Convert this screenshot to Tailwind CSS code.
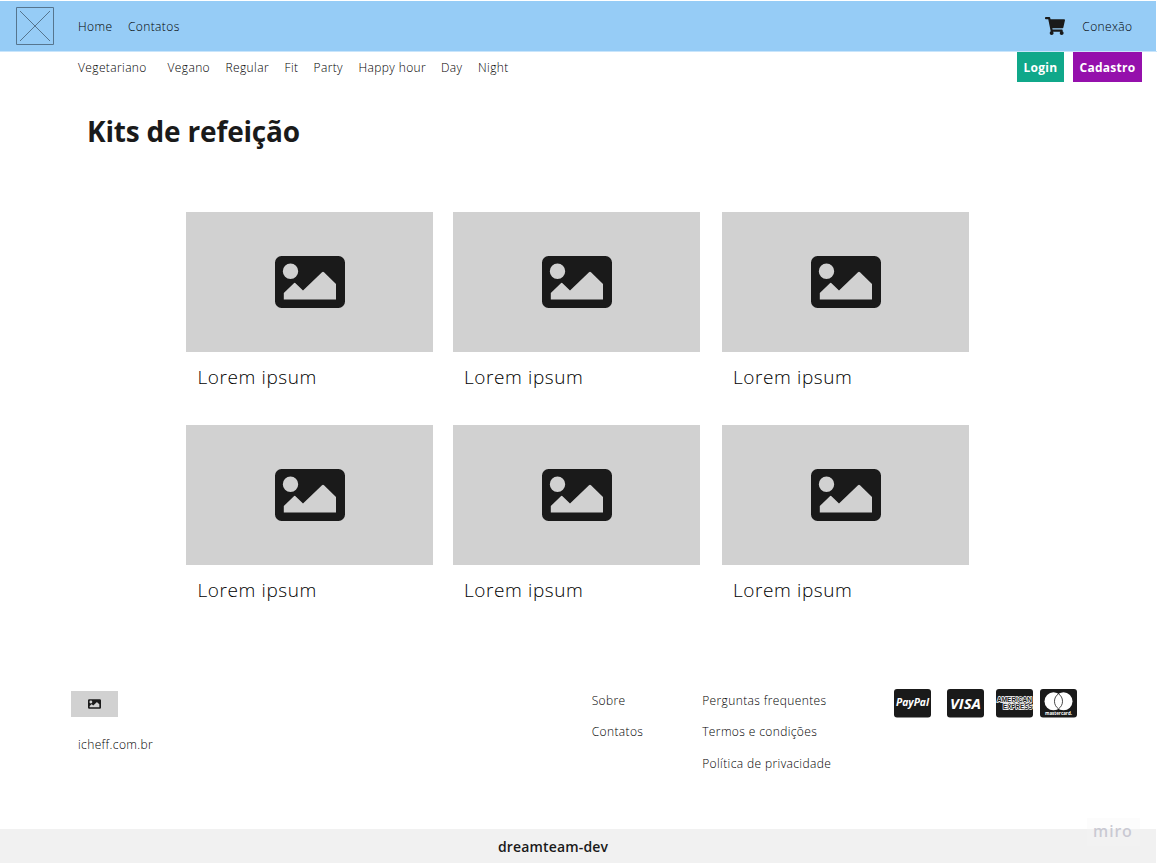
<!DOCTYPE html>
<html lang="pt-BR">
<head>
<meta charset="utf-8">
<title>Kits de refeição</title>
<script src="https://cdn.jsdelivr.net/npm/@tailwindcss/browser@4"></script>
</head>
<body class="relative flex h-[863px] w-[1157px] flex-col overflow-hidden bg-white font-['Open_Sans',sans-serif] text-[12px] leading-5 font-light tracking-[0.38px] whitespace-nowrap text-black">
<svg class="hidden">
  <symbol id="picture" viewBox="0 0 70 52"><path fill="#1a1a1a" fill-rule="evenodd" d="M6.500 0H63.500A6.500 6.500 0 0 1 70 6.500V45.500A6.500 6.500 0 0 1 63.500 52H6.500A6.500 6.500 0 0 1 0 45.500V6.500A6.500 6.500 0 0 1 6.500 0ZM15.500 7.500A7.700 7.700 0 1 0 15.500 22.900A7.700 7.700 0 1 0 15.500 7.500ZM8.800 43.600H61V28L49 16.200Q48 15.400 47 16.200L28 34.500L20.500 27.200Q19.700 26.500 18.900 27.200L8.800 37Z"/></symbol>
</svg>
<header class="mt-px flex h-[50px] w-[1156px] shrink-0 items-start bg-[#96ccf6] pt-[6px] pr-[23.500px] pl-4">
  <svg class="h-[38px] w-[38px]" viewBox="0 0 38 38" fill="none" stroke="#56758e" stroke-width="1"><path d="M.5.5h37v37H.5zM4 4l30 30M34 4L4 34"/></svg>
  <nav class="mt-[10px] ml-6 flex"><a class="w-[50px]">Home</a><a>Contatos</a></nav>
  <svg class="mt-[10px] ml-auto h-[18px] w-5" viewBox="0 0 576 512" preserveAspectRatio="none" fill="#1a1a1a"><path d="M528.120 301.319l47.273-208C578.806 78.301 567.391 64 551.990 64H159.208l-9.166-44.810C147.758 8.021 137.930 0 126.529 0H24C10.745 0 0 10.745 0 24v16c0 13.255 10.745 24 24 24h69.883l70.248 343.435C147.325 417.100 136 435.222 136 456c0 30.928 25.072 56 56 56s56-25.072 56-56c0-15.674-6.447-29.835-16.824-40h209.647C430.447 426.165 424 440.326 424 456c0 30.928 25.072 56 56 56s56-25.072 56-56c0-22.172-12.888-41.332-31.579-50.405l5.517-24.276c3.413-15.018-8.002-29.319-23.403-29.319H218.117l-6.545-32h293.145c11.206 0 20.920-7.754 23.403-18.681z"/></svg>
  <a class="mt-[10px] ml-[17px]">Conexão</a>
</header>
<div class="flex h-[31px] w-[1157px] shrink-0 border-t border-[#c9e5fb] pl-[78px]">
  <nav class="flex pt-[6px]"><a class="w-[89.500px]">Vegetariano</a><a class="w-[58px]">Vegano</a><a class="w-[59px]">Regular</a><a class="w-[29px]">Fit</a><a class="w-[45px]">Party</a><a class="w-[82.500px]">Happy hour</a><a class="w-[37px]">Day</a><a>Night</a></nav>
  <div class="mr-[15px] ml-auto flex gap-[9px] font-bold tracking-[0.250px] text-white">
    <a class="flex h-[30px] w-[47px] items-center justify-center bg-[#10a88a] pt-[2px]">Login</a>
    <a class="flex h-[30px] w-[69px] items-center justify-center bg-[#9510ac] pt-[2px]">Cadastro</a>
  </div>
</div>
<main class="h-[572px] shrink-0">
  <h1 class="mt-[29px] ml-[87px] text-[28px] leading-10 font-bold tracking-[-0.180px] text-[#1a1a1a]">Kits de refeição</h1>
  <div class="mt-[61px] ml-[186px] grid grid-cols-[266.500px_269px_247.500px] gap-y-[34px] text-[19px] tracking-[0.600px]">
    <article class="h-[179.300px] w-[247.400px]"><div class="flex h-[139.500px] items-center justify-center bg-[#d1d1d1] pl-[.900px]"><svg class="h-[52px] w-[70px]"><use href="#picture"/></svg></div><p class="mt-[11.500px] ml-[11.500px] leading-7">Lorem ipsum</p></article>
    <article class="h-[179.300px] w-[247.400px]"><div class="flex h-[139.500px] items-center justify-center bg-[#d1d1d1] pl-[.900px]"><svg class="h-[52px] w-[70px]"><use href="#picture"/></svg></div><p class="mt-[11.500px] ml-[11.500px] leading-7">Lorem ipsum</p></article>
    <article class="h-[179.300px] w-[247.400px]"><div class="flex h-[139.500px] items-center justify-center bg-[#d1d1d1] pl-[.900px]"><svg class="h-[52px] w-[70px]"><use href="#picture"/></svg></div><p class="mt-[11.500px] ml-[11.500px] leading-7">Lorem ipsum</p></article>
    <article class="h-[179.300px] w-[247.400px]"><div class="flex h-[139.500px] items-center justify-center bg-[#d1d1d1] pl-[.900px]"><svg class="h-[52px] w-[70px]"><use href="#picture"/></svg></div><p class="mt-[11.500px] ml-[11.500px] leading-7">Lorem ipsum</p></article>
    <article class="h-[179.300px] w-[247.400px]"><div class="flex h-[139.500px] items-center justify-center bg-[#d1d1d1] pl-[.900px]"><svg class="h-[52px] w-[70px]"><use href="#picture"/></svg></div><p class="mt-[11.500px] ml-[11.500px] leading-7">Lorem ipsum</p></article>
    <article class="h-[179.300px] w-[247.400px]"><div class="flex h-[139.500px] items-center justify-center bg-[#d1d1d1] pl-[.900px]"><svg class="h-[52px] w-[70px]"><use href="#picture"/></svg></div><p class="mt-[11.500px] ml-[11.500px] leading-7">Lorem ipsum</p></article>
  </div>
</main>
<footer class="flex grow flex-col">
  <div class="flex h-[175px] shrink-0 pl-[71px]">
    <div class="w-[520.700px] pt-[37px]">
      <div class="flex h-[26px] w-[47px] items-center justify-center bg-[#d1d1d1]"><svg class="h-[10px] w-[13px]"><use href="#picture"/></svg></div>
      <p class="mt-[18px] ml-[7px]">icheff.com.br</p>
    </div>
    <nav class="flex w-[110.500px] flex-col gap-[11px] pt-[37px]"><a>Sobre</a><a>Contatos</a></nav>
    <nav class="flex w-[191.800px] flex-col pt-[37px]"><a class="mb-[11px]">Perguntas frequentes</a><a class="mb-[12px]">Termos e condições</a><a>Política de privacidade</a></nav>
    <div class="flex pt-[35px] tracking-normal">
      <svg class="mr-[15px] h-[29px] w-[38px]" viewBox="0 0 38 29"><rect width="37" height="28.500" rx="3" fill="#1a1a1a"/><text x="2" y="17" textLength="33" lengthAdjust="spacingAndGlyphs" fill="#fff" font-size="10" font-weight="700" font-style="italic">PayPal</text></svg>
      <svg class="mr-[11px] h-[29px] w-[38px]" viewBox="0 0 38 29"><rect width="37" height="28.500" rx="3" fill="#1a1a1a"/><text x="3" y="19.500" textLength="31" lengthAdjust="spacingAndGlyphs" fill="#fff" font-size="15" font-weight="700" font-style="italic">VISA</text></svg>
      <svg class="mr-[6.500px] h-[29px] w-[38px]" viewBox="0 0 38 29"><rect width="37" height="28.500" rx="3" fill="#1a1a1a"/><g fill="#1a1a1a" stroke="#fff" stroke-width="1.500" paint-order="stroke" font-family="Liberation Sans" font-size="7" font-weight="700"><text x="1" y="12.800" textLength="35" lengthAdjust="spacingAndGlyphs">AMERICAN</text><text x="7" y="20.400" textLength="29.500" lengthAdjust="spacingAndGlyphs">EXPRESS</text></g></svg>
      <svg class="h-[29px] w-[38px]" viewBox="0 0 38 29"><rect width="37" height="28.500" rx="3" fill="#1a1a1a"/><circle cx="13.500" cy="12.300" r="9" fill="#fff"/><circle cx="23.500" cy="12.300" r="9" fill="#fff"/><path d="M18.500 4.800A9 9 0 0 1 18.500 19.800A9 9 0 0 1 18.500 4.800Z" fill="#fff" stroke="#1a1a1a" stroke-width=".800"/><text x="5" y="25.500" textLength="27" lengthAdjust="spacingAndGlyphs" fill="#fff" font-size="4.500" font-weight="700">mastercard.</text></svg>
    </div>
  </div>
  <div class="flex w-[1156px] grow items-center bg-[#f1f1f1] pt-[2px] pl-[498px] text-[14px] font-semibold tracking-[0.150px] text-[#1a1a1a]">dreamteam-dev</div>
</footer>
<div class="absolute top-[818px] left-[1087px] h-[28px] w-[53px] bg-[#f4f4f4]/30 pl-[6px] font-['Noto_Sans',sans-serif] text-[16px] leading-[26px] font-medium tracking-[1px] text-[#c9c9d2]">miro</div>
</body>
</html>
